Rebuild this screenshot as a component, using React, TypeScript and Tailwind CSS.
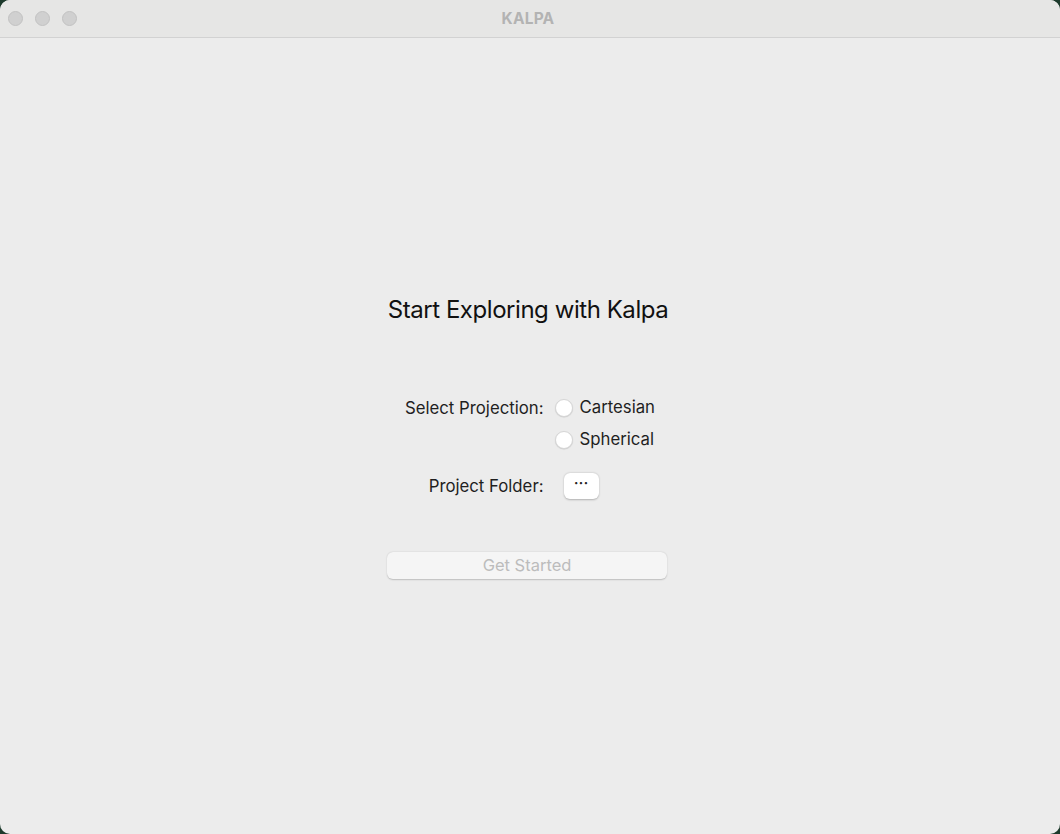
import { useState } from "react";

const font = { fontFamily: "Inter, 'Noto Sans', sans-serif" };

const Radio = ({ label, checked, onClick }: { label: string; checked: boolean; onClick: () => void }) => (
  <button onClick={onClick} className="flex items-center gap-[7px] h-[26px] text-[16.75px] text-[#1f1f1f]">
    <span className="w-[18px] h-[18px] rounded-full bg-white border border-[#d6d6d6] shadow-[0_0.5px_1px_rgba(0,0,0,0.15)] flex items-center justify-center">
      {checked && <span className="w-[7px] h-[7px] rounded-full bg-white" />}
    </span>
    <span>{label}</span>
  </button>
);

const App = () => {
  const [projection, setProjection] = useState<string>("");

  return (
    <div className="w-[1060px] h-[834px] bg-[#1d3a2c]" style={font}>
      <div className="w-full h-full rounded-[10px] overflow-hidden bg-[#ececec] flex flex-col">
        {/* title bar */}
        <div className="relative h-[38px] shrink-0 bg-[#e6e6e5] border-b border-[#d2d2d2] flex items-center">
          <div className="flex items-center gap-[12px] pl-[8px]">
            <span className="w-[15px] h-[15px] rounded-full bg-[#d0d0d0] border border-[#c2c2c2]" />
            <span className="w-[15px] h-[15px] rounded-full bg-[#d0d0d0] border border-[#c2c2c2]" />
            <span className="w-[15px] h-[15px] rounded-full bg-[#d0d0d0] border border-[#c2c2c2]" />
          </div>
          <div className="absolute inset-0 flex items-center justify-center text-[15.5px] font-bold text-[#b3b3b3] tracking-[0.2px] pr-[4px]">
            KALPA
          </div>
        </div>

        {/* content */}
        <div className="flex-1 flex flex-col items-center pt-[257px] pr-[4px]">
          <h1 className="text-[24px] leading-[30px] text-[#111] tracking-[-0.45px]">Start Exploring with Kalpa</h1>

          <div className="mt-[70px] grid grid-cols-[auto_auto] gap-x-[11px] items-center ml-[4px]">
            <div className="text-[16.75px] text-[#1f1f1f] text-right h-[26px] leading-[26px]">Select Projection:</div>
            <Radio label="Cartesian" checked={projection === "c"} onClick={() => setProjection("c")} />
            <div />
            <div className="mt-[6px]">
              <Radio label="Spherical" checked={projection === "s"} onClick={() => setProjection("s")} />
            </div>
            <div className="text-[16.75px] text-[#1f1f1f] text-right mt-[20px] leading-[26px]">Project Folder:</div>
            <div className="mt-[20px]">
              <button className="w-[35px] h-[26px] rounded-[6px] bg-white shadow-[0_0.5px_2px_rgba(0,0,0,0.25)] text-[17px] leading-none text-[#222] flex items-center justify-center pb-[5px] ml-[9px]">
                ···
              </button>
            </div>
          </div>

          <button
            disabled
            className="mt-[53px] w-[280px] h-[27px] rounded-[6px] bg-[#f5f5f5] shadow-[0_0.5px_1.5px_rgba(0,0,0,0.2)] text-[16.5px] text-[#bcbcbc] ml-[-2px]"
          >
            Get Started
          </button>
        </div>
      </div>
    </div>
  );
};

export default App;
